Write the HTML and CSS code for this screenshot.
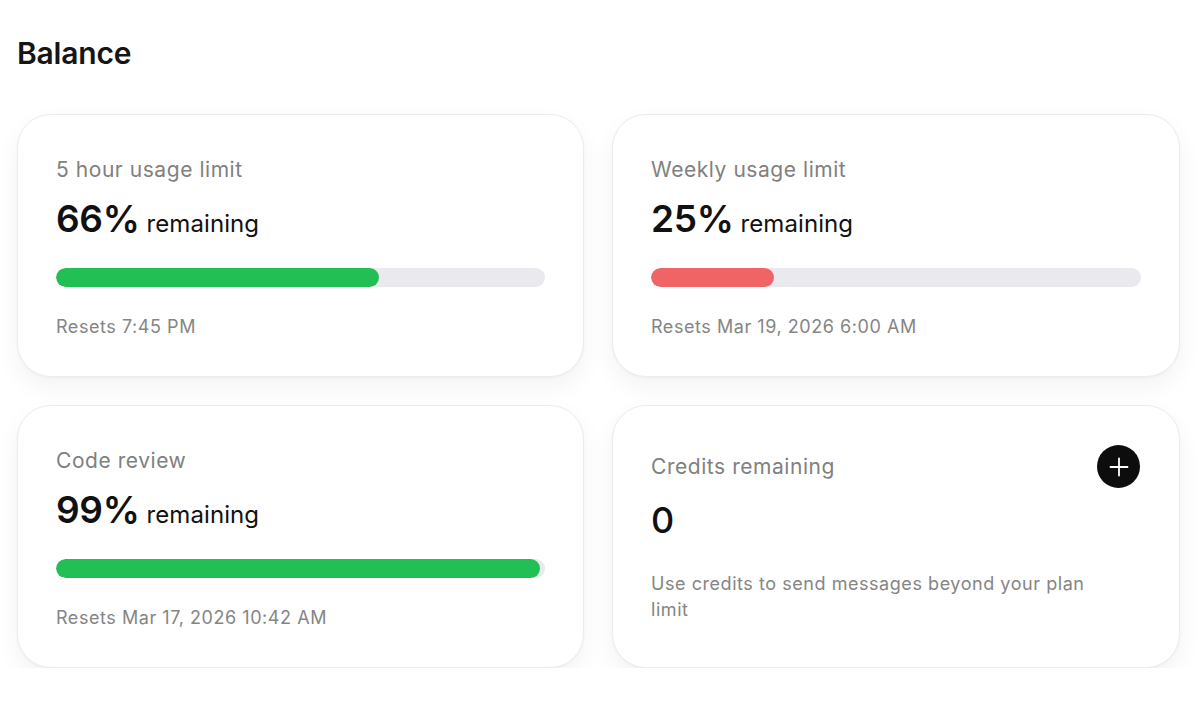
FILE: index.html
```html
<!DOCTYPE html>
<html>
<head>
<meta charset="utf-8">
<link rel="stylesheet" href="styles.css">
</head>
<body>
<main class="page">
  <h1 class="title">Balance</h1>
  <section class="grid">
    <div class="card">
      <div class="label">5 hour usage limit</div>
      <div class="value"><span class="pct">66%</span> remaining</div>
      <div class="track"><div class="fill green" style="width:66%"></div></div>
      <div class="note">Resets 7:45 PM</div>
    </div>
    <div class="card">
      <div class="label">Weekly usage limit</div>
      <div class="value"><span class="pct">25%</span> remaining</div>
      <div class="track"><div class="fill red" style="width:25%"></div></div>
      <div class="note">Resets Mar 19, 2026 6:00 AM</div>
    </div>
    <div class="card">
      <div class="label">Code review</div>
      <div class="value"><span class="pct">99%</span> remaining</div>
      <div class="track"><div class="fill green" style="width:99%"></div></div>
      <div class="note">Resets Mar 17, 2026 10:42 AM</div>
    </div>
    <div class="card credits">
      <div class="credits-head">
        <div class="label">Credits remaining</div>
        <button class="add" aria-label="Add credits">
          <svg width="20" height="20" viewBox="0 0 20 20"><path d="M10 1.5v17M1.5 10h17" stroke="#fff" stroke-width="1.8" stroke-linecap="round" fill="none"/></svg>
        </button>
      </div>
      <div class="count">0</div>
      <div class="desc">Use credits to send messages beyond your plan limit</div>
    </div>
  </section>
</main>
</body>
</html>
```

FILE: styles.css
```css
* { box-sizing: border-box; }
html, body { margin: 0; background: #fff; }
body {
  font-family: Inter, "Noto Sans", "Liberation Sans", sans-serif;
  color: #111;
}
.page {
  padding: 34px 20px 0 17px;
}
.title {
  margin: 0;
  font-size: 30px;
  font-weight: 600;
  line-height: 38px;
  letter-spacing: -0.2px;
  color: #151515;
}
.grid {
  margin-top: 42px;
  display: grid;
  grid-template-columns: 567px 568px;
  column-gap: 28px;
  row-gap: 28px;
}
.card {
  height: 263px;
  border: 1px solid #ececec;
  border-radius: 34px;
  background: #fff;
  box-shadow: 0 10px 24px rgba(0, 0, 0, 0.05), 0 1px 3px rgba(0, 0, 0, 0.03);
  padding: 41px 38px 0 38px;
}
.label {
  font-size: 21px;
  line-height: 28px;
  color: #808080;
  letter-spacing: 0.55px;
}
.value {
  margin-top: 15px;
  font-size: 24px;
  line-height: 40px;
  color: #111;
  letter-spacing: 0.1px;
}
.pct {
  font-size: 37px;
  font-weight: 600;
  letter-spacing: -0.3px;
}
.track {
  margin-top: 24px;
  height: 19px;
  border-radius: 10px;
  background: #e9e9ee;
  overflow: hidden;
}
.fill { height: 100%; border-radius: 10px; }
.green { background: #22bf55; }
.red { background: #f06465; }
.note {
  margin-top: 28px;
  font-size: 18px;
  line-height: 24px;
  color: #858585;
  letter-spacing: 0.55px;
}
.credits-head {
  display: flex;
  align-items: center;
  justify-content: space-between;
  margin-top: -2px;
}
.add {
  width: 43px;
  height: 43px;
  border-radius: 50%;
  border: none;
  background: #0d0d0d;
  display: flex;
  align-items: center;
  justify-content: center;
  padding: 0;
  margin-right: 1px;
}
.count {
  margin-top: 10px;
  font-size: 36px;
  font-weight: 500;
  line-height: 44px;
  color: #111;
}
.desc {
  margin-top: 29px;
  font-size: 18px;
  line-height: 26px;
  color: #858585;
  letter-spacing: 0.55px;
  max-width: 445px;
}
```
